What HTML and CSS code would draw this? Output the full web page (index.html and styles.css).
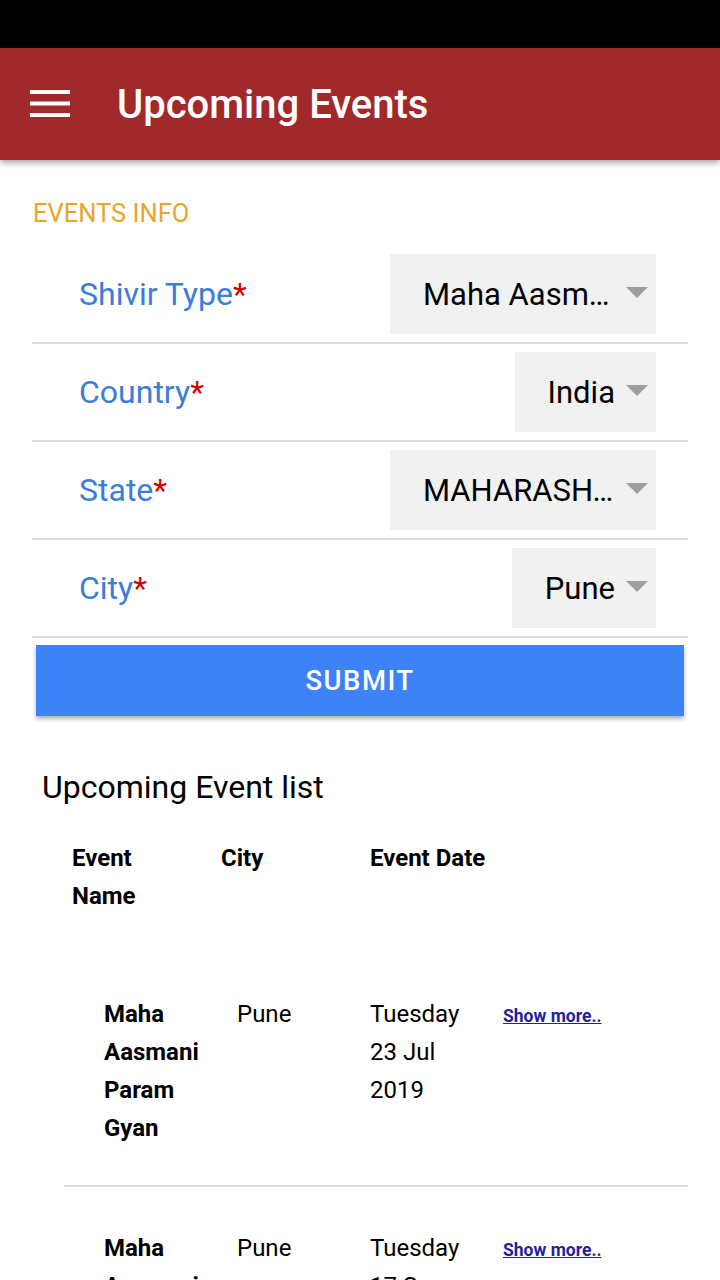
FILE: index.html
```html
<!DOCTYPE html>
<html lang="en">
<head>
    <meta charset="UTF-8">
    <meta name="viewport" content="width=device-width, initial-scale=1.0">
    <title>Upcoming Events</title>
    <link rel="stylesheet" href="styles.css">
</head>
<body>
    <div class="status-bar"></div>
    <header class="app-bar">
        <svg class="menu-icon" width="40" height="28" viewBox="0 0 40 28">
            <rect x="0" y="0" width="40" height="4" fill="#fff"/>
            <rect x="0" y="11.5" width="40" height="4" fill="#fff"/>
            <rect x="0" y="23" width="40" height="4" fill="#fff"/>
        </svg>
        <h1>Upcoming Events</h1>
    </header>
    <main>
        <p class="section-title">EVENTS INFO</p>
        <form>
            <div class="field">
                <label>Shivir Type<span class="req">*</span></label>
                <span class="select"><span class="select-value">Maha Aasmani Param Gyan</span><span class="caret"></span></span>
            </div>
            <div class="field">
                <label>Country<span class="req">*</span></label>
                <span class="select"><span class="select-value">India</span><span class="caret"></span></span>
            </div>
            <div class="field">
                <label>State<span class="req">*</span></label>
                <span class="select"><span class="select-value">MAHARASHTRA</span><span class="caret"></span></span>
            </div>
            <div class="field">
                <label>City<span class="req">*</span></label>
                <span class="select"><span class="select-value">Pune</span><span class="caret"></span></span>
            </div>
            <button type="button" class="submit">SUBMIT</button>
        </form>

        <h2 class="list-title">Upcoming Event list</h2>
        <div class="list-head">
            <span>Event Name</span>
            <span>City</span>
            <span>Event Date</span>
        </div>
        <ul class="events">
            <li class="event">
                <span class="event-name">Maha Aasmani Param Gyan</span>
                <span>Pune</span>
                <span>Tuesday 23 Jul 2019</span>
                <a href="#" class="more">Show more..</a>
            </li>
            <li class="event">
                <span class="event-name">Maha Aasmani Param Gyan</span>
                <span>Pune</span>
                <span>Tuesday 17 Sep 2019</span>
                <a href="#" class="more">Show more..</a>
            </li>
        </ul>
    </main>
</body>
</html>
```

FILE: styles.css
```css
* {
    box-sizing: border-box;
}
html, body {
    margin: 0;
}
body {
    font-family: Roboto, "Noto Sans", sans-serif;
    background: #fff;
    color: #000;
    height: 1280px;
    overflow: hidden;
}
.status-bar {
    height: 48px;
    background: #000;
}
.app-bar {
    height: 112px;
    background: #a2292b;
    display: flex;
    align-items: center;
    padding-left: 30px;
    box-shadow: 0 3px 6px rgba(0,0,0,.35);
    position: relative;
}
.menu-icon {
    display: block;
}
.app-bar h1 {
    margin: 0 0 0 47px;
    color: #fff;
    font-size: 40px;
    font-weight: 500;
}
main {
    padding: 0 32px;
}
.section-title {
    margin: 38px 0 0 1px;
    font-size: 25.5px;
    line-height: 30px;
    color: #e9a52b;
}
form {
    margin-top: 18px;
}
.field {
    height: 98px;
    border-bottom: 2px solid #dedede;
    display: flex;
    align-items: center;
    justify-content: space-between;
}
.field label {
    padding-left: 47px;
    font-size: 32px;
    color: #3b7dd8;
}
.req {
    color: #d50000;
}
.select {
    height: 80px;
    margin-right: 32px;
    background: #f1f1f1;
    display: flex;
    align-items: center;
    padding: 0 8px 0 33px;
    font-size: 31px;
}
.select-value {
    max-width: 192px;
    overflow: hidden;
    white-space: nowrap;
    text-overflow: ellipsis;
}
.caret {
    margin-left: 11px;
    width: 0;
    height: 0;
    border-left: 11px solid transparent;
    border-right: 11px solid transparent;
    border-top: 11px solid #9e9e9e;
    margin-bottom: 4px;
}
.submit {
    display: block;
    width: 648px;
    height: 71px;
    margin: 7px 0 0 4px;
    border: 0;
    background: #3d83f5;
    color: #fff;
    font-family: Roboto, sans-serif;
    font-size: 27.5px;
    font-weight: 500;
    letter-spacing: 1.5px;
    box-shadow: 0 3px 4px rgba(0,0,0,.3);
}
.list-title {
    margin: 53px 0 0 10px;
    font-size: 32px;
    line-height: 36px;
    font-weight: 400;
}
.list-head {
    margin-top: 34px;
    padding-left: 40px;
    display: grid;
    grid-template-columns: 149px 149px auto;
    font-size: 24px;
    font-weight: 700;
    line-height: 38px;
}
.list-head span:first-child {
    width: 80px;
}
.events {
    list-style: none;
    margin: 38px 0 0 32px;
    padding: 0;
}
.event {
    display: grid;
    grid-template-columns: 133px 133px 133px auto;
    align-items: start;
    padding: 42px 0 38px 40px;
    border-bottom: 2px solid #dedede;
    font-size: 24px;
    line-height: 38px;
}
.event span {
    padding-right: 20px;
}
.event-name {
    font-weight: 700;
}
.more {
    font-size: 17.5px;
    font-weight: 700;
    color: #22229a;
    line-height: 42px;
}
```
